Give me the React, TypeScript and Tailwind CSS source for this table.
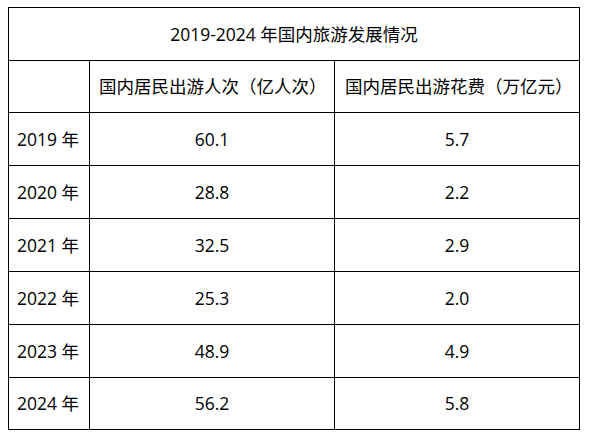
import { Fragment } from "react";

const rows = [
  { year: "2019 年", trips: "60.1", spend: "5.7" },
  { year: "2020 年", trips: "28.8", spend: "2.2" },
  { year: "2021 年", trips: "32.5", spend: "2.9" },
  { year: "2022 年", trips: "25.3", spend: "2.0" },
  { year: "2023 年", trips: "48.9", spend: "4.9" },
  { year: "2024 年", trips: "56.2", spend: "5.8" },
];

export default function App() {
  return (
    <div
      className="w-[592px] h-[442px] bg-white pl-2 pt-[7px] text-black text-[17.5px]"
      style={{ fontFamily: "'Open Sans', 'Noto Sans CJK SC', sans-serif" }}
    >
      {/* table drawn as a grid: black background shows through 1px gaps */}
      <div className="grid w-[572px] grid-cols-[80px_244px_244px] grid-rows-[52px_51px_52px_52px_52px_52px_52px_51px] gap-px bg-black p-px">
        <div className="col-span-3 flex items-center justify-center bg-white">
          2019-2024 年国内旅游发展情况
        </div>

        <div className="bg-white"></div>
        <div className="flex items-center bg-white pl-[9px]">国内居民出游人次（亿人次）</div>
        <div className="flex items-center bg-white pl-[10px]">国内居民出游花费（万亿元）</div>

        {rows.map((r) => (
          <Fragment key={r.year}>
            <div className="flex items-center bg-white pl-[8px]">{r.year}</div>
            <div className="flex items-center justify-center bg-white">{r.trips}</div>
            <div className="flex items-center justify-center bg-white">{r.spend}</div>
          </Fragment>
        ))}
      </div>
    </div>
  );
}
